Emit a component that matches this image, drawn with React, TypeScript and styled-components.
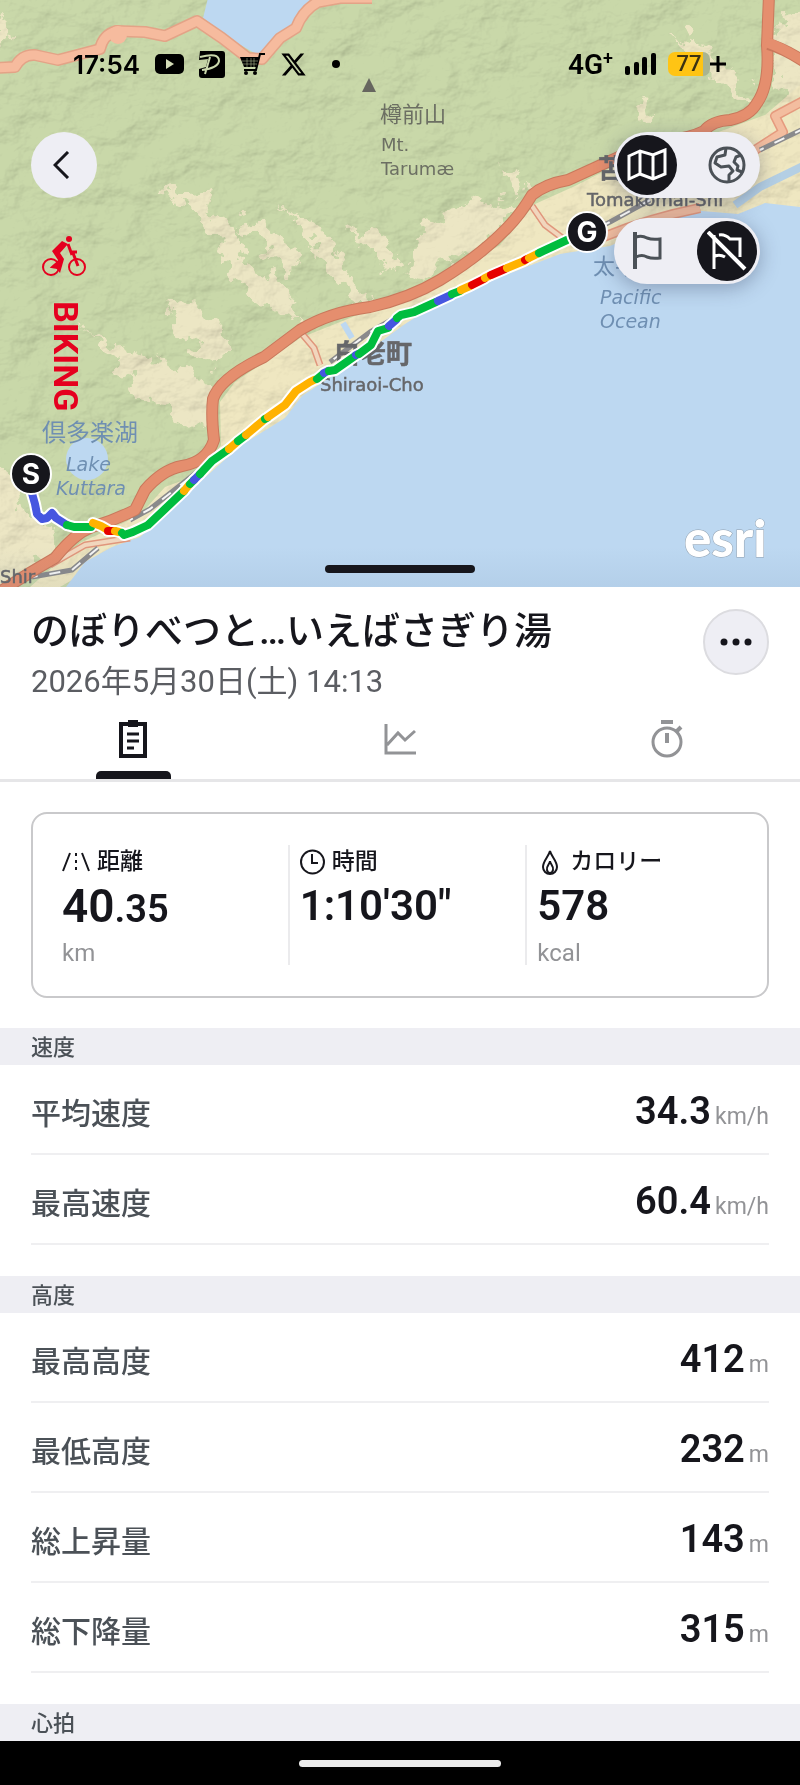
import { useState } from "react";
import type { ReactNode } from "react";
import styled, { createGlobalStyle } from "styled-components";
import { FaXTwitter } from "react-icons/fa6";

const GlobalStyle = createGlobalStyle`
  * {
    box-sizing: border-box;
  }

  body {
    margin: 0;
    background: #fff;
    color: #16161c;
    font-family: Roboto, "Noto Sans CJK JP", sans-serif;
  }

  button {
    padding: 0;
    border: 0;
    font: inherit;
    cursor: pointer;
  }

  h1, h2, p, dl, dd {
    margin: 0;
  }
`;

const Page = styled.div`
  display: flex;
  flex-direction: column;
  min-height: 100vh;
`;

const MapArea = styled.section`
  position: relative;
  overflow: hidden;
`;

const MapSvg = styled.svg`
  display: block;
  width: 100%;
  height: auto;

  text {
    font-family: "DejaVu Sans", "Noto Sans CJK JP", sans-serif;
  }
`;

const Overlay = styled.div`
  position: absolute;
  inset: 0;
  display: flex;
  flex-direction: column;
  padding: 44px 40px 14px 31px;
`;

const StatusBar = styled.div`
  display: flex;
  align-items: center;
  justify-content: space-between;
  height: 40px;
  padding: 0 34px 0 42px;
  color: #000;
  font-family: Inter, sans-serif;
  font-size: 26px;
  font-weight: 600;
`;

const StatusGroup = styled.div<{ $gap: number }>`
  display: flex;
  align-items: center;
  gap: ${({ $gap }) => $gap}px;
`;

const Network = styled.span`
  font-family: Roboto, sans-serif;
  font-size: 28px;

  sup {
    font-size: 18px;
    line-height: 0;
  }
`;

const Battery = styled.div`
  display: flex;
  align-items: center;
  font-family: Roboto, sans-serif;
`;

const BatteryLevel = styled.span`
  width: 42px;
  border-radius: 7px;
  background: linear-gradient(90deg, #ffc414 84%, #a9b490 84%);
  color: #3c3213;
  font-size: 22px;
  font-weight: 500;
  line-height: 24px;
  text-align: center;
`;

const MapControls = styled.div`
  display: flex;
  align-items: flex-start;
  justify-content: space-between;
  margin-top: 48px;
`;

const LeftColumn = styled.div`
  display: flex;
  flex-direction: column;
  align-items: center;
`;

const RightColumn = styled.div`
  display: flex;
  flex-direction: column;
  gap: 20px;
`;

const RoundButton = styled.button<{ $outlined?: boolean }>`
  display: grid;
  place-items: center;
  flex: none;
  width: 66px;
  height: 66px;
  border: ${({ $outlined }) => ($outlined ? "2px solid #dcdce0" : "0")};
  border-radius: 50%;
  background: #eeeef4;
  color: #16161c;
`;

const Activity = styled.div`
  display: flex;
  flex-direction: column;
  align-items: center;
  gap: 24px;
  margin-top: 37px;
  color: #e5001f;
`;

const ActivityName = styled.span`
  padding-left: 4px;
  writing-mode: vertical-rl;
  font-size: 34px;
  font-weight: 700;
  line-height: 40px;
`;

const Toggle = styled.div`
  display: flex;
  align-items: center;
  justify-content: space-between;
  width: 146px;
  height: 66px;
  padding: 3px;
  border-radius: 33px;
  background: #eeeef4;
  box-shadow: 0 4px 20px rgba(40, 50, 80, 0.35);
`;

const ToggleButton = styled.button<{ $active: boolean }>`
  display: grid;
  place-items: center;
  width: 60px;
  height: 60px;
  border-radius: 50%;
  background: ${({ $active }) => ($active ? "#16161c" : "transparent")};
  color: ${({ $active }) => ($active ? "#fff" : "#4b5157")};
`;

const DragHandle = styled.div`
  align-self: center;
  width: 150px;
  height: 8px;
  margin: auto 0 0 9px;
  border-radius: 4px;
  background: #16161c;
`;

const Header = styled.header`
  display: flex;
  align-items: flex-start;
  justify-content: space-between;
  padding: 22px 31px 0;
`;

const Title = styled.h1`
  font-size: 38px;
  font-weight: 500;
  line-height: 44px;
`;

const DateText = styled.p`
  margin-top: 9px;
  color: #5b5d62;
  font-size: 31px;
  font-weight: 400;
  line-height: 40px;
`;

const Tabs = styled.div`
  display: grid;
  grid-template-columns: repeat(3, 1fr);
  border-bottom: 3px solid #e6e6e8;
`;

const Tab = styled.button<{ $active: boolean }>`
  display: flex;
  flex-direction: column;
  align-items: center;
  justify-content: space-between;
  height: 77px;
  padding-top: 18px;
  background: none;
  color: ${({ $active }) => ($active ? "#16161c" : "#929396")};

  &::after {
    content: "";
    width: 75px;
    height: 8px;
    border-radius: 5px 5px 0 0;
    background: ${({ $active }) => ($active ? "#16161c" : "transparent")};
  }
`;

const Card = styled.section`
  display: grid;
  grid-template-columns: repeat(3, 1fr);
  margin: 30px 31px;
  padding: 31px 4px 31px 17px;
  border: 2px solid #c9c9cb;
  border-radius: 16px;
`;

const Summary = styled.div`
  padding-left: 10px;
  border-left: 2px solid #ebebed;

  &:first-child {
    border-color: transparent;
  }
`;

const SummaryLabel = styled.h2`
  display: flex;
  align-items: center;
  gap: 7px;
  font-size: 23px;
  font-weight: 500;
  line-height: 34px;
`;

const SummaryValue = styled.p`
  height: 52px;
  font-size: 42px;
  font-weight: 600;
  line-height: 54px;
`;

const Whole = styled.span`
  font-size: 46px;
`;

const Fraction = styled.span`
  font-size: 38px;
`;

const SummaryUnit = styled.p`
  height: 24px;
  margin-top: 10px;
  color: #929396;
  font-size: 24px;
  line-height: 24px;
`;

const Section = styled.section`
  &:not(:last-child) {
    padding-bottom: 31px;
  }
`;

const SectionTitle = styled.h2`
  padding: 2px 31px 0;
  background: #eeeef3;
  color: #4b5157;
  font-size: 22px;
  font-weight: 500;
  line-height: 35px;
`;

const Rows = styled.dl`
  padding: 0 31px;
`;

const Row = styled.div`
  display: flex;
  align-items: center;
  justify-content: space-between;
  height: 90px;
  padding-top: 4px;
  border-bottom: 2px solid #efeff1;
`;

const RowLabel = styled.dt`
  color: #4b5157;
  font-size: 30px;
  font-weight: 500;
`;

const RowValue = styled.dd`
  display: flex;
  align-items: baseline;
  gap: 4px;
  font-size: 38px;
  font-weight: 600;
`;

const RowUnit = styled.span`
  color: #929396;
  font-size: 23px;
  font-weight: 400;
`;

const SystemBar = styled.footer`
  display: grid;
  place-items: center;
  height: 45px;
  margin-top: auto;
  background: #000;

  &::after {
    content: "";
    width: 202px;
    height: 7px;
    border-radius: 4px;
    background: #ebebeb;
  }
`;

const BLUE = "#4656e0";
const GREEN = "#00bd3e";
const ORANGE = "#ffb200";
const RED = "#e60000";

// speed-coloured pieces of the track, start to goal
const track: { color: string; points: string }[] = [
  { color: BLUE, points: "31,490 35,504 37,514 42,519 47,518 52,513 56,518 67,525" },
  { color: GREEN, points: "67,525 74,527 91,527" },
  { color: ORANGE, points: "93,523 101,526 108,530" },
  { color: RED, points: "108,531 114,531" },
  { color: ORANGE, points: "115,531 119,532" },
  { color: GREEN, points: "122,533 124,535 133,532 148,525 165,509 184,491" },
  { color: ORANGE, points: "184,491 189,485" },
  { color: GREEN, points: "190,484 194,480" },
  { color: BLUE, points: "194,480 200,474" },
  { color: GREEN, points: "200,474 212,461 229,449" },
  { color: ORANGE, points: "229,449 237,442" },
  { color: GREEN, points: "238,441 246,435" },
  { color: ORANGE, points: "246,435 265,419" },
  { color: GREEN, points: "265,419 267,418" },
  { color: ORANGE, points: "268,417 285,405 296,391 310,382 314,380" },
  { color: GREEN, points: "317,379 323,374" },
  { color: BLUE, points: "324,373 328,371" },
  { color: GREEN, points: "329,371 335,370 345,363 355,356" },
  { color: BLUE, points: "356,355 358,354" },
  { color: GREEN, points: "359,354 371,345 378,331 388,328" },
  { color: BLUE, points: "389,326 396,320" },
  { color: GREEN, points: "397,318 401,315 414,312 436,302" },
  { color: BLUE, points: "438,301 451,295" },
  { color: GREEN, points: "452,294 460,291" },
  { color: ORANGE, points: "461,290 470,286" },
  { color: RED, points: "472,285 484,279" },
  { color: ORANGE, points: "485,278 489,276" },
  { color: RED, points: "491,275 505,269" },
  { color: ORANGE, points: "507,268 524,261" },
  { color: RED, points: "525,260 527,259" },
  { color: ORANGE, points: "529,258 537,254" },
  { color: GREEN, points: "539,253 567,240" },
];

const highway =
  "M769-5 767 45Q770 85 757 103 750 116 730 120 712 121 704 131 690 138 668 140 640 146 612 160 590 170 568 180 545 184 532 195 520 215 507 228 480 256 440 280 410 298 370 307 330 312 300 330L264 357Q220 378 213 399 211 415 214 440 207 462 182 466 162 470 145 490L135 510Q115 520 92 527 75 533 55 558 25 575-5 595";
const minorRoad =
  "M-5 68 15 67Q22 54 35 55L58 60 100 49Q103 35 116 31L145 32 165 36 197 21 222 38 248 58 262 59 280 38 296 28Q303 10 318 2L340-2 372-2";
const coastRoad = "M805 100 775 116 783 132 755 150 M700 208Q650 218 606 236L580 246";
const railway =
  "M805 128 760 150 M650 200 610 222 565 244 M400 315 370 332 330 362 M225 450 150 509 130 520 M98 548 72 570 32 577";

const MapDrawing = () => (
  <MapSvg viewBox="0 0 800 587" role="img" aria-label="BIKING">
    <defs>
      <filter id="relief" x="0" y="0" width="100%" height="100%">
        <feTurbulence type="fractalNoise" baseFrequency="0.022 0.03" numOctaves="5" seed="8" />
        <feDiffuseLighting surfaceScale="9" lightingColor="#fff" diffuseConstant="1.15">
          <feDistantLight azimuth="225" elevation="55" />
        </feDiffuseLighting>
      </filter>
      <filter id="ragged" x="-10%" y="-10%" width="120%" height="120%">
        <feTurbulence type="fractalNoise" baseFrequency="0.06" numOctaves="4" seed="3" />
        <feDisplacementMap in="SourceGraphic" scale="34" xChannelSelector="R" yChannelSelector="G" />
      </filter>
      <linearGradient id="bottomShade" x1="0" y1="0" x2="0" y2="1">
        <stop offset="0" stopColor="#3a5a80" stopOpacity="0" />
        <stop offset="1" stopColor="#3a5a80" stopOpacity="0.07" />
      </linearGradient>
    </defs>
    <rect width="800" height="587" fill="#c9d8a9" />
    {/* cultivated land */}
    <g fill="#ece6c4" filter="url(#ragged)">
      <path d="M160 190 200 188 215 215 235 225 250 262 285 290 300 320 270 310 235 280 215 235 190 205Z" />
      <path d="M240 225 262 218 285 240 300 255 295 275 265 250Z" />
      <path d="M285 205 315 230 350 270 375 310 360 310 325 262Z" />
      <path d="M350 225 380 235 400 260 398 280 375 255Z" />
      <path d="M85 330 120 350 165 362 200 375 212 395 208 430 185 420 140 395 125 370Z" />
      <path d="M165 300 205 310 235 345 215 365 175 330Z" />
      <path d="M-10 465 15 480 25 520 60 535 50 560-10 590Z" />
      <path d="M0 20 10 15 12 40 0 50Z" />
      <path d="M425 225 460 205 500 198 520 210 480 245 430 275 405 270Z" />
      <path d="M500 165 525 180 515 200Z" />
      <path d="M670 35 700 40 740 80 755 110 720 85Z" />
      <path d="M775 20 810 0 810 90 780 95Z" />
      <path d="M630 108 648 100 650 120Z" />
    </g>
    <path
      fill="#efe7c1"
      d="M800 85 765 115 705 137 640 153 575 186 535 204 500 245 430 286 350 318 300 338 235 382 220 402 221 445 205 472 165 487 140 515 80 543 30 587 60 587 150 535 350 375 500 280 610 250 800 215Z"
    />
    <rect width="800" height="587" filter="url(#relief)" opacity="0.24" style={{ mixBlendMode: "multiply" }} />
    {/* water */}
    <path
      fill="#bdd8f1"
      d="M800 207 765 203 738 214 690 210 610 246 560 254 500 277 440 302 405 324 372 348 335 374 302 396 285 418 240 446 200 482 160 519 140 537 112 547 85 562 66 587H800Z"
    />
    <path fill="#bdd8f1" d="M208-2 203 18 232 40 256 54 266 54 286 34 312-2Z" />
    <path d="M735 205 760 187 805 165" fill="none" stroke="#b4cfe4" strokeWidth="8" />
    <path d="M343 323 352 338" stroke="#bdd8f1" strokeWidth="6" />
    <circle cx="87" cy="459" r="21" fill="#bdd8f1" />
    {/* roads */}
    <g fill="none" strokeLinejoin="round">
      <path d={coastRoad} stroke="#e59a7e" strokeWidth="10" />
      <path d={coastRoad} stroke="#f3bd9f" strokeWidth="7" />
      <path d={minorRoad} stroke="#e3a387" strokeWidth="12" />
      <path d={minorRoad} stroke="#f6bb9e" strokeWidth="9" />
      <circle cx="118" cy="35" r="9" fill="#f6bb9e" />
      <path d="M532 206 545 225 565 240 M303 335 314 348 320 365 M130 538 85 545 50 565" stroke="#e0967c" strokeWidth="7" />
      <path d="M532 206 545 225 565 240 M303 335 314 348 320 365 M130 538 85 545 50 565" stroke="#f1d6bd" strokeWidth="4" />
      <path d={railway} stroke="#8a8a8c" strokeWidth="5" />
      <path d={railway} stroke="#f5f5f5" strokeWidth="2" strokeDasharray="11 12" />
      <path d={highway} stroke="#c9785c" strokeWidth="12" />
      <path d={highway} stroke="#e58e6e" strokeWidth="10" />
      <path d="M768 44Q783 48 805 62" stroke="#c9785c" strokeWidth="12" />
      <path d="M766 42Q783 48 805 62" stroke="#e58e6e" strokeWidth="10" />
    </g>
    {/* place names */}
    <path d="M369 78 376 92H362Z" fill="#66665f" />
    <g fill="#6c6f63" fontSize="18">
      <text x="380" y="122" fontSize="22">樽前山</text>
      <text x="381" y="151">Mt.</text>
      <text x="381" y="175">Tarumæ</text>
    </g>
    <g fill="#66676a" stroke="#66676a" strokeWidth="0.5" fontSize="18">
      <text x="598" y="178" fontSize="26" fontWeight="700">苫小牧市</text>
      <text x="587" y="206">Tomakomai-Shi</text>
      <text x="334" y="363" fontSize="26" fontWeight="700">白老町</text>
      <text x="320" y="391">Shiraoi-Cho</text>
      <text x="0" y="583">Shir</text>
    </g>
    <g fill="#6f8fb2" fontSize="19">
      <text x="42" y="441" fontSize="24">倶多楽湖</text>
      <text x="66" y="471" fontStyle="italic">Lake</text>
      <text x="56" y="495" fontStyle="italic">Kuttara</text>
      <text x="593" y="274" fontSize="22">太平洋</text>
      <text x="600" y="304" fontStyle="italic">Pacific</text>
      <text x="600" y="328" fontStyle="italic">Ocean</text>
    </g>
    <rect y="547" width="800" height="40" fill="url(#bottomShade)" />
    {/* track */}
    <g fill="none" strokeLinejoin="round">
      {track.map(({ points }) => (
        <polyline key={points} points={points} stroke="#fff" strokeWidth="12" strokeLinecap="round" />
      ))}
      {track.map(({ color, points }) => (
        <polyline key={points} points={points} stroke={color} strokeWidth="8" strokeLinecap="round" />
      ))}
    </g>
    <g fill="#16161c" stroke="#fff" strokeWidth="2">
      <circle cx="31" cy="474" r="20" />
      <circle cx="587" cy="232" r="20" />
    </g>
    <g fill="#fff" fontSize="28" fontWeight="700" textAnchor="middle">
      <text x="31" y="484" style={{ fontFamily: "Inter, sans-serif" }}>S</text>
      <text x="587" y="242" style={{ fontFamily: "Inter, sans-serif" }}>G</text>
    </g>
    <text
      x="684"
      y="557"
      fill="#fff"
      stroke="#8f9fae"
      strokeWidth="1"
      paintOrder="stroke"
      fontSize="51"
      fontWeight="900"
      style={{ fontFamily: "Lato, sans-serif" }}
    >
      esri
    </text>
  </MapSvg>
);

const VideoIcon = () => (
  <svg width="29" height="20" viewBox="0 0 29 20">
    <rect width="29" height="20" rx="5" />
    <path d="M11 5 19 10 11 15Z" fill="#d4dcb8" />
  </svg>
);

const PayIcon = () => (
  <svg width="26" height="27" viewBox="0 0 26 27">
    <path d="M1 0H23Q26 0 26 3V24Q26 27 23 27H3Q0 27 0 24V18L7 16 9 8 0 9Z" />
    <path d="M1 6Q20 1 20 10 19 17 3 19M11 6 6 23" fill="none" stroke="#cbd8ad" strokeWidth="2" />
  </svg>
);

const CartIcon = () => (
  <svg width="25" height="23" viewBox="0 0 25 23">
    <path d="M0 4H19L16 14H4Z" />
    <path d="M25 1H20L16 17H4" fill="none" stroke="#000" strokeWidth="2" />
    <path d="M2 8H18M3 11H17M7 5V14M11 5V14M14 5V14" stroke="#c5d3a4" strokeWidth="0.5" />
    <circle cx="6" cy="20" r="2" />
    <circle cx="15" cy="20" r="2" />
  </svg>
);

const SignalIcon = () => (
  <svg width="31" height="22" viewBox="0 0 31 22">
    <rect y="13" width="5" height="9" rx="2" />
    <rect x="9" y="9" width="5" height="13" rx="2" />
    <rect x="17" y="4" width="5" height="18" rx="2" />
    <rect x="26" width="5" height="22" rx="2" />
  </svg>
);

const BackIcon = () => (
  <svg width="22" height="28" viewBox="0 0 22 28" fill="none" stroke="currentColor" strokeWidth="3">
    <path d="M15 1 2 14 15 27" />
  </svg>
);

const BikeIcon = () => (
  <svg width="44" height="42" viewBox="0 0 44 42" fill="none" stroke="currentColor" strokeWidth="2">
    <circle cx="9" cy="32" r="8" />
    <circle cx="35" cy="32" r="8" />
    <circle cx="27" cy="4" r="3" fill="currentColor" stroke="none" />
    <path d="M26 9 30 20M29 17H35M31 18 36 31" strokeWidth="3" />
    <path d="M10 16 20 6 26 9 18 18 22 24 18 38 14 33 16 25Z" fill="currentColor" stroke="none" />
    <path d="M10 32 17 26 16 33Z" fill="currentColor" />
  </svg>
);

const MapIcon = () => (
  <svg width="40" height="34" viewBox="0 0 40 34" fill="none" stroke="currentColor" strokeWidth="3">
    <path d="M2 8 13 3 26 7 38 2V26L26 31 13 26 2 31ZM13 3V26M26 7V31" />
  </svg>
);

const GlobeIcon = () => (
  <svg width="38" height="38" viewBox="0 0 38 38" fill="none" stroke="currentColor" strokeWidth="3">
    <circle cx="19" cy="19" r="17" />
    <path d="M18 2 17 9 9 11 7 17 13 21 21 20 25 25 21 29V35M33 9 28 11 26 16 30 20 29 24 34 26" strokeLinejoin="round" />
  </svg>
);

const FlagIcon = () => (
  <svg width="30" height="40" viewBox="0 0 30 40" fill="none" stroke="currentColor" strokeWidth="3">
    <path d="M3 1V38" strokeWidth="4" />
    <path d="M4 6Q10 4 15 7 20 9 28 8V27Q20 28 15 26 10 23 4 26" />
  </svg>
);

const FlagOffIcon = () => (
  <svg width="40" height="40" viewBox="0 0 40 40" fill="none" stroke="currentColor" strokeWidth="3">
    <path d="M7 4V38M8 25Q13 23 18 26M12 4Q18 3 23 8H33V26" />
    <path d="M1 1 38 38" strokeWidth="4" />
  </svg>
);

const MoreIcon = () => (
  <svg width="32" height="8" viewBox="0 0 32 8" fill="currentColor">
    <circle cx="4" cy="4" r="3.5" />
    <circle cx="16" cy="4" r="3.5" />
    <circle cx="28" cy="4" r="3.5" />
  </svg>
);

const ReportIcon = () => (
  <svg width="30" height="38" viewBox="0 0 30 38" fill="none" stroke="currentColor" strokeWidth="4">
    <path d="M3 4H27V36H3Z" />
    <path d="M9 14H21M9 21H21M9 28H16" strokeWidth="3" />
    <path d="M10 0H20V7H10Z" fill="currentColor" stroke="none" />
  </svg>
);

const ChartIcon = () => (
  <svg width="32" height="38" viewBox="0 0 32 38" fill="none" stroke="currentColor" strokeWidth="3">
    <path d="M2 4V33H32M3 25 14 13 21 20 31 11" />
  </svg>
);

const TimerIcon = () => (
  <svg width="32" height="38" viewBox="0 0 32 38" fill="none" stroke="currentColor" strokeWidth="4">
    <circle cx="16" cy="22" r="14" strokeWidth="3" />
    <path d="M10 2H22M16 13V23M26 11 30 7" />
  </svg>
);

const DistanceIcon = () => (
  <svg width="28" height="20" viewBox="0 0 28 20" fill="none" stroke="currentColor" strokeWidth="2">
    <path d="M8 1 1 19M20 1 27 19" />
    <path d="M14 1V19" strokeDasharray="3 4" />
  </svg>
);

const ClockIcon = () => (
  <svg width="25" height="26" viewBox="0 0 25 26" fill="none" stroke="currentColor" strokeWidth="2">
    <circle cx="12.5" cy="13" r="11.5" />
    <path d="M12 5V14H18" />
  </svg>
);

const FlameIcon = () => (
  <svg width="26" height="26" viewBox="0 0 26 26" fill="none" stroke="currentColor" strokeWidth="2">
    <path d="M13 2C14 7 20 12 20 18A7 7 0 0 1 6 18C6 12 12 7 13 2Z" />
    <path d="M13 12C13 15 17 17 16 21 15 25 11 25 10 21 9 17 13 15 13 12Z" />
  </svg>
);

const tabs: { id: string; label: string; icon: ReactNode }[] = [
  { id: "report", label: "レポート", icon: <ReportIcon /> },
  { id: "chart", label: "グラフ", icon: <ChartIcon /> },
  { id: "laps", label: "ラップ", icon: <TimerIcon /> },
];

const sections = [
  {
    title: "速度",
    rows: [
      { label: "平均速度", value: "34.3", unit: "km/h" },
      { label: "最高速度", value: "60.4", unit: "km/h" },
    ],
  },
  {
    title: "高度",
    rows: [
      { label: "最高高度", value: "412", unit: "m" },
      { label: "最低高度", value: "232", unit: "m" },
      { label: "総上昇量", value: "143", unit: "m" },
      { label: "総下降量", value: "315", unit: "m" },
    ],
  },
  { title: "心拍", rows: [] },
];

const App = () => {
  const [tab, setTab] = useState("report");
  const [satellite, setSatellite] = useState(false);
  const [flags, setFlags] = useState(false);

  return (
    <Page>
      <GlobalStyle />
      <MapArea>
        <MapDrawing />
        <Overlay>
          <StatusBar>
            <StatusGroup $gap={15}>
              <span>17:54</span>
              <VideoIcon />
              <PayIcon />
              <CartIcon />
              <FaXTwitter size={27} />
              <svg width="30" height="8" viewBox="0 0 30 8">
                <circle cx="14" cy="4" r="4" />
              </svg>
            </StatusGroup>
            <StatusGroup $gap={12}>
              <Network>
                4G<sup>+</sup>
              </Network>
              <SignalIcon />
              <Battery>
                <BatteryLevel>77</BatteryLevel>
                <svg width="16" height="16" viewBox="0 0 16 16" stroke="#000" strokeWidth="3">
                  <path d="M0 8H16M8 0V16" />
                </svg>
              </Battery>
            </StatusGroup>
          </StatusBar>
          <MapControls>
            <LeftColumn>
              <RoundButton aria-label="戻る">
                <BackIcon />
              </RoundButton>
              <Activity>
                <BikeIcon />
                <ActivityName>BIKING</ActivityName>
              </Activity>
            </LeftColumn>
            <RightColumn>
              <Toggle>
                <ToggleButton $active={!satellite} aria-label="地図" onClick={() => setSatellite(false)}>
                  <MapIcon />
                </ToggleButton>
                <ToggleButton $active={satellite} aria-label="衛星写真" onClick={() => setSatellite(true)}>
                  <GlobeIcon />
                </ToggleButton>
              </Toggle>
              <Toggle>
                <ToggleButton $active={flags} aria-label="フラグを表示" onClick={() => setFlags(true)}>
                  <FlagIcon />
                </ToggleButton>
                <ToggleButton $active={!flags} aria-label="フラグを隠す" onClick={() => setFlags(false)}>
                  <FlagOffIcon />
                </ToggleButton>
              </Toggle>
            </RightColumn>
          </MapControls>
          <DragHandle />
        </Overlay>
      </MapArea>

      <Header>
        <div>
          <Title>のぼりべつと…いえばさぎり湯</Title>
          <DateText>2026年5月30日(土) 14:13</DateText>
        </div>
        <RoundButton $outlined aria-label="メニュー">
          <MoreIcon />
        </RoundButton>
      </Header>

      <Tabs role="tablist">
        {tabs.map(({ id, label, icon }) => (
          <Tab
            key={id}
            role="tab"
            aria-label={label}
            aria-selected={tab === id}
            $active={tab === id}
            onClick={() => setTab(id)}
          >
            {icon}
          </Tab>
        ))}
      </Tabs>

      <Card>
        <Summary>
          <SummaryLabel>
            <DistanceIcon />
            距離
          </SummaryLabel>
          <SummaryValue>
            <Whole>40</Whole>
            <Fraction>.35</Fraction>
          </SummaryValue>
          <SummaryUnit>km</SummaryUnit>
        </Summary>
        <Summary>
          <SummaryLabel>
            <ClockIcon />
            時間
          </SummaryLabel>
          <SummaryValue>1:10'30"</SummaryValue>
        </Summary>
        <Summary>
          <SummaryLabel>
            <FlameIcon />
            カロリー
          </SummaryLabel>
          <SummaryValue>578</SummaryValue>
          <SummaryUnit>kcal</SummaryUnit>
        </Summary>
      </Card>

      <main>
        {sections.map(({ title, rows }) => (
          <Section key={title}>
            <SectionTitle>{title}</SectionTitle>
            <Rows>
              {rows.map(({ label, value, unit }) => (
                <Row key={label}>
                  <RowLabel>{label}</RowLabel>
                  <RowValue>
                    {value}
                    <RowUnit>{unit}</RowUnit>
                  </RowValue>
                </Row>
              ))}
            </Rows>
          </Section>
        ))}
      </main>

      <SystemBar />
    </Page>
  );
};

export default App;
